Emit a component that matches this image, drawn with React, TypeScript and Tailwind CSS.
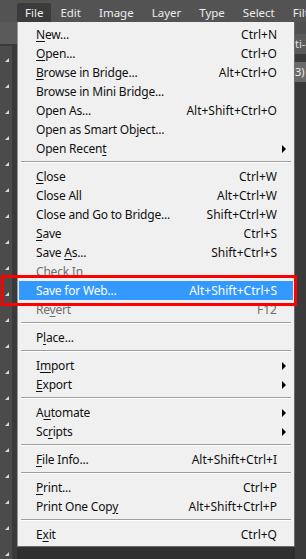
import React from "react";

type Item =
    | { kind: "sep" }
    | { kind: "item"; label: string; shortcut?: string; sub?: boolean; disabled?: boolean; active?: boolean };

// "&" marks the mnemonic letter, like a Windows menu resource
const items: Item[] = [
    { kind: "item", label: "&New...", shortcut: "Ctrl+N" },
    { kind: "item", label: "&Open...", shortcut: "Ctrl+O" },
    { kind: "item", label: "&Browse in Bridge...", shortcut: "Alt+Ctrl+O" },
    { kind: "item", label: "Browse in Mini Brid&ge..." },
    { kind: "item", label: "Open As...", shortcut: "Alt+Shift+Ctrl+O" },
    { kind: "item", label: "Open as Smart Object..." },
    { kind: "item", label: "Open Recen&t", sub: true },
    { kind: "sep" },
    { kind: "item", label: "&Close", shortcut: "Ctrl+W" },
    { kind: "item", label: "Close All", shortcut: "Alt+Ctrl+W" },
    { kind: "item", label: "Close and Go to Bridge...", shortcut: "Shift+Ctrl+W" },
    { kind: "item", label: "&Save", shortcut: "Ctrl+S" },
    { kind: "item", label: "Save &As...", shortcut: "Shift+Ctrl+S" },
    { kind: "item", label: "Check In", disabled: true },
    { kind: "item", label: "Save for Web...", shortcut: "Alt+Shift+Ctrl+S", active: true },
    { kind: "item", label: "Re&vert", shortcut: "F12", disabled: true },
    { kind: "sep" },
    { kind: "item", label: "P&lace..." },
    { kind: "sep" },
    { kind: "item", label: "I&mport", sub: true },
    { kind: "item", label: "&Export", sub: true },
    { kind: "sep" },
    { kind: "item", label: "A&utomate", sub: true },
    { kind: "item", label: "Sc&ripts", sub: true },
    { kind: "sep" },
    { kind: "item", label: "&File Info...", shortcut: "Alt+Shift+Ctrl+I" },
    { kind: "sep" },
    { kind: "item", label: "&Print...", shortcut: "Ctrl+P" },
    { kind: "item", label: "Print One Cop&y", shortcut: "Alt+Shift+Ctrl+P" },
    { kind: "sep" },
    { kind: "item", label: "E&xit", shortcut: "Ctrl+Q" },
];

function Label({ text }: { text: string }) {
    const i = text.indexOf("&");
    if (i < 0) return <>{text}</>;
    return (
        <>
            {text.slice(0, i)}
            <span className="underline underline-offset-2">{text[i + 1]}</span>
            {text.slice(i + 2)}
        </>
    );
}

const menus = ["File", "Edit", "Image", "Layer", "Type", "Select", "Filter"];

export default function App() {
    return (
        <div
            className="w-[306px] h-[559px] bg-[#2f2f2f] flex flex-col overflow-hidden relative"
            style={{ fontFamily: '"Noto Sans", "Segoe UI", sans-serif' }}
        >
            {/* Menu bar */}
            <div className="h-[22px] bg-[#535353] flex items-end pl-[17px] text-[11.5px] text-[#ececec] shrink-0 whitespace-nowrap">
                {menus.map((m, i) => (
                    <div
                        key={m}
                        className={
                            i === 0
                                ? "h-[19px] px-[8px] bg-[#3b3b3b] rounded-t-[2px] flex items-center shrink-0"
                                : "h-[19px] px-[9px] flex items-center shrink-0"
                        }
                    >
                        {m}
                    </div>
                ))}
            </div>

            <div className="flex flex-1">
                {/* Tool strip on the left */}
                <div className="w-[17px] flex flex-col">
                    <div className="h-[22px] bg-[#5a5a5a]" />
                    <div className="h-[2px] bg-[#3a3a3a]" />
                    <div className="flex-1 bg-[#4b4b4b] border-r-[5px] border-[#3a3a3a] flex flex-col items-start pl-[5px] pt-[12px] gap-[22px]">
                        {Array.from({ length: 20 }).map((_, i) => (
                            <div key={i} className="w-0 h-0 border-l-[4px] border-l-transparent border-b-[4px] border-b-[#d8d8d8]" />
                        ))}
                    </div>
                </div>

                {/* The File menu */}
                <div className="w-[278px] self-start bg-[#f0f0f0] border-l border-[#979797] border-r border-b border-r-[#6a6a6a] border-b-[#6a6a6a] pt-[3px] pb-[2px] pl-[1px] pr-[1px] text-[12px] leading-none">
                    {items.map((it, i) =>
                        it.kind === "sep" ? (
                            <div key={i} className="h-[9px] pt-[3px] px-[2px]">
                                <div className="h-px bg-[#a0a0a0]" />
                                <div className="h-px bg-white" />
                            </div>
                        ) : (
                            <div
                                key={i}
                                className={
                                    "h-[19px] flex items-center pl-[17px] pr-[16px] " +
                                    (it.active
                                        ? "bg-[#3399ff] text-white"
                                        : it.disabled
                                        ? "text-[#6d6d6d]"
                                        : "text-[#101010]")
                                }
                            >
                                <span className="flex-1 whitespace-nowrap tracking-[-0.2px]">
                                    <Label text={it.label} />
                                </span>
                                {it.shortcut && <span className="whitespace-nowrap">{it.shortcut}</span>}
                                {it.sub && (
                                    <svg width="6" height="8" viewBox="0 0 6 8" className="mr-[-11px]">
                                        <path d="M0 0 L4 4 L0 8 Z" fill="#000" />
                                    </svg>
                                )}
                            </div>
                        )
                    )}
                </div>

                {/* Panels on the right */}
                <div className="flex-1 flex flex-col text-[11px] text-[#e0e0e0] overflow-hidden">
                    <div className="h-[12px] bg-[#4e4e4e]" />
                    <div className="h-[20px] bg-[#5a5a5a] flex items-center">ti-</div>
                    <div className="h-[8px] bg-[#3a3a3a]" />
                    <div className="h-[20px] bg-[#6a6a6a] flex items-center text-[#f0f0f0]">3)</div>
                    <div className="flex-1 bg-[#3a3a3a]" />
                </div>
            </div>

            {/* Red annotation box around the selected row */}
            <div className="absolute left-[1px] top-[275px] w-[296px] h-[31px] border-[3px] border-[#ff0000]" />
        </div>
    );
}
